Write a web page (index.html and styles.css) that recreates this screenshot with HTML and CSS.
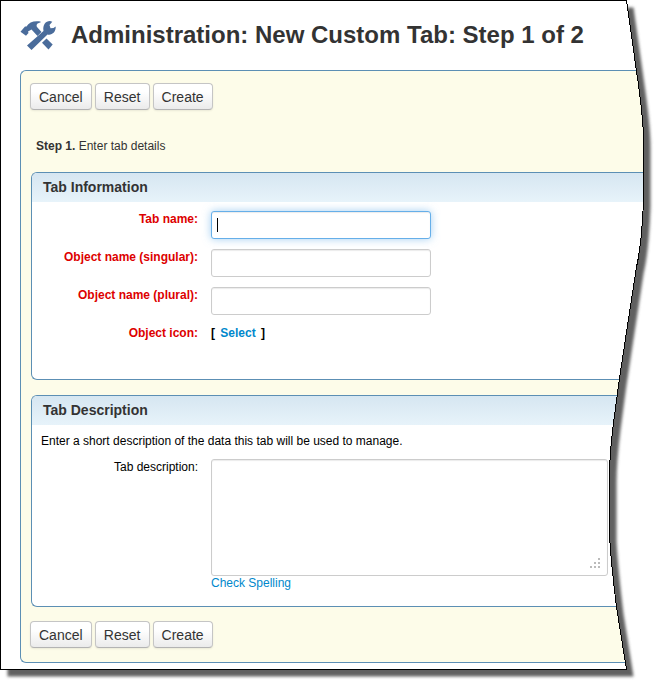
FILE: index.html
```html
<!DOCTYPE html>
<html lang="en">
<head>
    <meta charset="UTF-8">
    <meta name="viewport" content="width=device-width, initial-scale=1.0">
    <title>Administration: New Custom Tab</title>
    <link rel="stylesheet" href="styles.css">
</head>
<body>

    <div class="page">
        <header class="page-header">
            <svg class="tools-icon" viewBox="0 0 36 30" aria-hidden="true">
                <!-- wrench -->
                <path d="M7 25.500 L23.500 11 C22.500 5 25.500 1 30 1 L32.300 1.700 L29.500 5 L30.500 8.300 L33.500 8 L35.700 6.500 C36 12 32 15.500 27.500 14.500 L11.500 30 Z"/>
                <!-- hammer -->
                <path d="M.5 11.700 L5 6.500 L6.500 6.500 C9 2 14 .5 20.500 1.500 L20.500 2.500 C17 3 16 5 17 7 L21.500 12 L17.500 16 L11.500 9.500 L8 11.500 L8.500 13 L6 15.700 Z"/>
                <path d="M26.500 18.500 L32.700 24.500 L28.500 29.500 L22 22.700 Z"/>
            </svg>
            <h1>Administration: New Custom Tab: Step 1 of 2</h1>
        </header>

        <form class="panel">
            <div class="buttons">
                <button type="button">Cancel</button>
                <button type="reset">Reset</button>
                <button type="submit">Create</button>
            </div>

            <p class="step"><strong>Step 1.</strong> Enter tab details</p>

            <section class="box box-info">
                <h2>Tab Information</h2>
                <div class="row required">
                    <label for="tabName">Tab name:</label>
                    <div class="field">
                        <input class="focused" type="text" id="tabName" name="tabName">
                        <span class="caret"></span>
                    </div>
                </div>
                <div class="row required">
                    <label for="singular">Object name (singular):</label>
                    <input type="text" id="singular" name="singular">
                </div>
                <div class="row required">
                    <label for="plural">Object name (plural):</label>
                    <input type="text" id="plural" name="plural">
                </div>
                <div class="row required">
                    <span class="label">Object icon:</span>
                    <span class="picker">[ <a href="#">Select</a> ]</span>
                </div>
            </section>

            <section class="box box-description">
                <h2>Tab Description</h2>
                <p class="hint">Enter a short description of the data this tab will be used to manage.</p>
                <div class="row">
                    <label for="description">Tab description:</label>
                    <div class="field">
                        <textarea id="description" name="description"></textarea>
                        <svg class="grip" viewBox="0 0 10 10" aria-hidden="true">
                            <path d="M8 0h2v2h-2z M8 4h2v2h-2z M4 4h2v2h-2z M8 8h2v2h-2z M4 8h2v2h-2z M0 8h2v2h-2z"/>
                        </svg>
                        <a href="#">Check Spelling</a>
                    </div>
                </div>
            </section>

            <div class="buttons">
                <button type="button">Cancel</button>
                <button type="reset">Reset</button>
                <button type="submit">Create</button>
            </div>
        </form>

        <!-- torn paper edge with its shadow -->
        <svg class="torn-edge" viewBox="0 0 661 686" preserveAspectRatio="none" aria-hidden="true">
            <defs>
                <path id="sheet" d="M0.500 0.500 H626.500 L636.500 71 Q643.500 118 643.500 140 V200 Q642 243 636.500 267 L619.500 378 L613.500 423 Q609.500 455 609.500 475 V535 Q611 562 616.500 607 L626.500 669.500 H0.500 Z"/>
                <clipPath id="outside">
                    <path clip-rule="evenodd" d="M0 0 H661 V686 H0 Z M0.500 0.500 H626.500 L636.500 71 Q643.500 118 643.500 140 V200 Q642 243 636.500 267 L619.500 378 L613.500 423 Q609.500 455 609.500 475 V535 Q611 562 616.500 607 L626.500 669.500 H0.500 Z"/>
                </clipPath>
                <filter id="soft">
                    <feGaussianBlur stdDeviation="1.500"/>
                </filter>
            </defs>
            <g clip-path="url(#outside)">
                <rect class="backdrop" width="661" height="686"/>
                <g filter="url(#soft)">
                    <use class="shadow" href="#sheet" x="7" y="7"/>
                </g>
            </g>
            <use class="outline" href="#sheet"/>
        </svg>
    </div>

</body>
</html>
```
FILE: styles.css
```css
body {
    margin: 0;
    background: #fff;
    color: #333;
    font-family: "Liberation Sans", Arial, sans-serif;
    font-size: 12px;
    line-height: 16px;
}

.page {
    position: relative;
    padding: 16px 0 23px 20px;
    overflow: hidden;
}

/* Header */
.page-header {
    display: flex;
    align-items: center;
    gap: 15px;
    height: 38px;
    margin-bottom: 16px;
}

.tools-icon {
    flex: none;
    width: 36px;
    height: 30px;
    fill: #4a6c9b;
}

h1 {
    margin: 0;
    font-size: 24px;
    line-height: 38px;
    white-space: nowrap;
}

/* Main panel */
.panel {
    padding: 12px 0 14px 9px;
    background: #fdfce9;
    border: 1px solid #5c8fb4;
    border-right: none;
    border-radius: 6px 0 0 6px;
}

.buttons {
    display: flex;
    gap: 3px;
}

button {
    height: 27px;
    min-width: 55px;
    padding: 0 8px;
    font-family: inherit;
    font-size: 14px;
    line-height: 20px;
    color: #333;
    background: linear-gradient(#fff 30%, #ebebeb);
    border: 1px solid #c5c5c5;
    border-bottom-color: #b3b3b3;
    border-radius: 4px;
    box-shadow: 0 1px 2px rgba(0, 0, 0, 0.08);
}

.step {
    margin: 28px 0 18px 6px;
}

/* Boxes */
.box {
    margin: 0 0 15px 1px;
    background: #fff;
    border: 1px solid #5c8fb4;
    border-right: none;
    border-radius: 6px 0 0 6px;
    color: #000;
    overflow: hidden;
}

.box-info {
    padding-bottom: 38px;
}

.box-description {
    padding-bottom: 16px;
    margin-bottom: 14px;
}

h2 {
    margin: 0 0 9px;
    padding: 0 11px;
    color: #333;
    font-size: 14px;
    line-height: 29px;
    background: linear-gradient(#d6e6f1, #e7f3fa);
}

.row {
    display: grid;
    grid-template-columns: 166px 1fr;
    column-gap: 13px;
    align-items: start;
    margin-bottom: 10px;
}

.row:last-child {
    margin-bottom: 0;
}

.row label,
.row .label {
    text-align: right;
}

.required {
    font-weight: bold;
}

.required label,
.required .label {
    color: #d00;
}

.field {
    position: relative;
    line-height: 14px;
}

input,
textarea {
    display: block;
    box-sizing: border-box;
    padding: 4px 5px;
    font-family: inherit;
    font-size: 13px;
    background: #fff;
    border: 1px solid #ccc;
    border-radius: 3px;
    box-shadow: inset 0 1px 1px rgba(0, 0, 0, 0.08);
    outline: none;
}

input {
    width: 220px;
    height: 28px;
}

.focused {
    border-color: #66afe9;
    box-shadow: inset 0 1px 1px rgba(0, 0, 0, 0.08), 0 0 8px rgba(102, 175, 233, 0.6);
}

.caret {
    position: absolute;
    left: 6px;
    top: 7px;
    width: 1px;
    height: 14px;
    background: #000;
}

a {
    color: #0088cc;
    text-decoration: none;
}

.picker a {
    margin: 0 2px;
}

.hint {
    margin: -1px 9px 10px;
}

textarea {
    width: 397px;
    height: 117px;
    resize: none;
}

.grip {
    position: absolute;
    left: 379px;
    top: 99px;
    width: 10px;
    height: 10px;
    fill: #bbb;
}

/* Torn edge */
.torn-edge {
    position: absolute;
    top: 0;
    left: 0;
    width: 100%;
    height: 100%;
    pointer-events: none;
}

.backdrop {
    fill: #fff;
}

.shadow {
    fill: #606060;
}

.outline {
    fill: none;
    stroke: #000;
    shape-rendering: crispEdges;
}
```
